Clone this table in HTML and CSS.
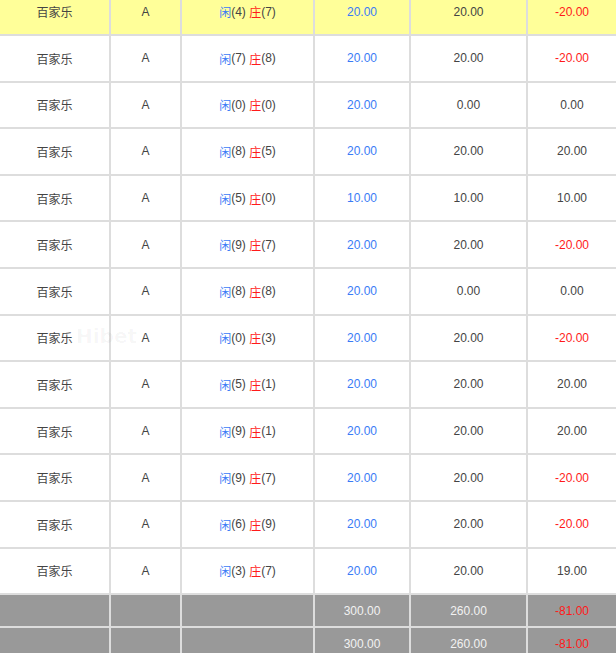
FILE: index.html
```html
<!DOCTYPE html>
<html>
<head>
<meta charset="utf-8">
<link rel="stylesheet" href="styles.css">
</head>
<body>
<div class="wrap">
  <div class="grid" id="grid">
    <div class="c hl">百家乐</div><div class="c hl">A</div><div class="c hl"><span class="b">闲</span>(4) <span class="r">庄</span>(7)</div><div class="c hl b">20.00</div><div class="c hl">20.00</div><div class="c hl r">-20.00</div>
    <div class="c">百家乐</div><div class="c">A</div><div class="c"><span class="b">闲</span>(7) <span class="r">庄</span>(8)</div><div class="c b">20.00</div><div class="c">20.00</div><div class="c r">-20.00</div>
    <div class="c">百家乐</div><div class="c">A</div><div class="c"><span class="b">闲</span>(0) <span class="r">庄</span>(0)</div><div class="c b">20.00</div><div class="c">0.00</div><div class="c">0.00</div>
    <div class="c">百家乐</div><div class="c">A</div><div class="c"><span class="b">闲</span>(8) <span class="r">庄</span>(5)</div><div class="c b">20.00</div><div class="c">20.00</div><div class="c">20.00</div>
    <div class="c">百家乐</div><div class="c">A</div><div class="c"><span class="b">闲</span>(5) <span class="r">庄</span>(0)</div><div class="c b">10.00</div><div class="c">10.00</div><div class="c">10.00</div>
    <div class="c">百家乐</div><div class="c">A</div><div class="c"><span class="b">闲</span>(9) <span class="r">庄</span>(7)</div><div class="c b">20.00</div><div class="c">20.00</div><div class="c r">-20.00</div>
    <div class="c">百家乐</div><div class="c">A</div><div class="c"><span class="b">闲</span>(8) <span class="r">庄</span>(8)</div><div class="c b">20.00</div><div class="c">0.00</div><div class="c">0.00</div>
    <div class="c">百家乐</div><div class="c">A</div><div class="c"><span class="b">闲</span>(0) <span class="r">庄</span>(3)</div><div class="c b">20.00</div><div class="c">20.00</div><div class="c r">-20.00</div>
    <div class="c">百家乐</div><div class="c">A</div><div class="c"><span class="b">闲</span>(5) <span class="r">庄</span>(1)</div><div class="c b">20.00</div><div class="c">20.00</div><div class="c">20.00</div>
    <div class="c">百家乐</div><div class="c">A</div><div class="c"><span class="b">闲</span>(9) <span class="r">庄</span>(1)</div><div class="c b">20.00</div><div class="c">20.00</div><div class="c">20.00</div>
    <div class="c">百家乐</div><div class="c">A</div><div class="c"><span class="b">闲</span>(9) <span class="r">庄</span>(7)</div><div class="c b">20.00</div><div class="c">20.00</div><div class="c r">-20.00</div>
    <div class="c">百家乐</div><div class="c">A</div><div class="c"><span class="b">闲</span>(6) <span class="r">庄</span>(9)</div><div class="c b">20.00</div><div class="c">20.00</div><div class="c r">-20.00</div>
    <div class="c">百家乐</div><div class="c">A</div><div class="c"><span class="b">闲</span>(3) <span class="r">庄</span>(7)</div><div class="c b">20.00</div><div class="c">20.00</div><div class="c">19.00</div>
    <div class="c t"></div><div class="c t"></div><div class="c t"></div><div class="c t">300.00</div><div class="c t">260.00</div><div class="c t r">-81.00</div>
    <div class="c t"></div><div class="c t"></div><div class="c t"></div><div class="c t">300.00</div><div class="c t">260.00</div><div class="c t r">-81.00</div>
  </div>
  <div class="mark">Hibet</div>
</div>
</body>
</html>
```
FILE: styles.css
```css
html, body {
  margin: 0;
  padding: 0;
  background: #fff;
  overflow: hidden;
}
.wrap {
  position: relative;
  width: 616px;
  height: 653px;
  overflow: hidden;
}
.grid {
  display: grid;
  grid-template-columns: 109px 69px 131px 94px 115px 88px;
  grid-template-rows: repeat(13, 44.6px) 31px 31px;
  gap: 2px;
  background: #dddddd;
  margin-top: -10.6px;
  font-family: "Liberation Sans", "Noto Sans CJK SC", sans-serif;
  font-size: 12px;
  color: #444;
}
.c {
  background: #fff;
  display: flex;
  align-items: center;
  justify-content: center;
  white-space: pre;
}
.hl {
  background: #ffff99;
}
.t {
  background: #999999;
  color: #f2f2f2;
}
.b {
  color: #3a7bf6;
}
.r {
  color: #ff1a1a;
}
.t.r {
  color: #ff1a1a;
}
.mark {
  position: absolute;
  left: 76px;
  top: 324px;
  font-family: "DejaVu Sans", sans-serif;
  font-weight: bold;
  font-size: 20px;
  color: rgba(0, 0, 0, 0.035);
  pointer-events: none;
}
```
